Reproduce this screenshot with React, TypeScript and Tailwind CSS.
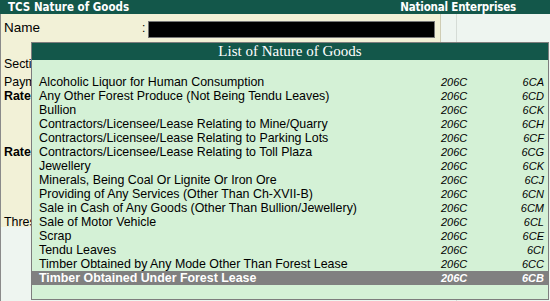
import React from "react";

const rows: [string, string, string][] = [
  ["Alcoholic Liquor for Human Consumption", "206C", "6CA"],
  ["Any Other Forest Produce (Not Being Tendu Leaves)", "206C", "6CD"],
  ["Bullion", "206C", "6CK"],
  ["Contractors/Licensee/Lease Relating to Mine/Quarry", "206C", "6CH"],
  ["Contractors/Licensee/Lease Relating to Parking Lots", "206C", "6CF"],
  ["Contractors/Licensee/Lease Relating to Toll Plaza", "206C", "6CG"],
  ["Jewellery", "206C", "6CK"],
  ["Minerals, Being Coal Or Lignite Or Iron Ore", "206C", "6CJ"],
  ["Providing of Any Services (Other Than Ch-XVII-B)", "206C", "6CN"],
  ["Sale in Cash of Any Goods (Other Than Bullion/Jewellery)", "206C", "6CM"],
  ["Sale of Motor Vehicle", "206C", "6CL"],
  ["Scrap", "206C", "6CE"],
  ["Tendu Leaves", "206C", "6CI"],
  ["Timber Obtained by Any Mode Other Than Forest Lease", "206C", "6CC"],
  ["Timber Obtained Under Forest Lease", "206C", "6CB"],
];

export default function App() {
  return (
    <div
      className="relative w-[550px] h-[301px] overflow-hidden bg-[#EEF5F0] text-black"
      style={{ fontFamily: '"Liberation Sans", Arial, sans-serif' }}
    >
      {/* header */}
      <div
        className="h-[14px] bg-[#13574A] text-white font-bold text-[11.5px] leading-[14px] flex justify-between pl-[8px] pr-[34px]"
        style={{ fontFamily: '"DejaVu Sans Condensed", "DejaVu Sans", sans-serif' }}
      >
        <span>TCS Nature of Goods</span>
        <span className="tracking-[-0.2px]">National Enterprises</span>
      </div>

      <div className="flex h-[287px]">
        {/* left cream panel */}
        <div className="w-[441px] flex flex-col border-l border-[#8a8a8a]">
          <div className="h-[213px] bg-[#F2F1D7] border-r border-[#cfcdb4]">
            <div className="h-[28px] flex items-center">
              <span className="pl-[3px] w-[141px] text-[13.5px]">Name</span>
              <span className="text-[12px] w-[6px]">:</span>
              <div className="w-[287px] h-[17px] bg-black border border-[#777] mt-[3px]" />
            </div>
            <div className="pl-[3px] w-[30px] overflow-hidden whitespace-nowrap text-[12.4px] leading-[14px]">
              <div className="mt-[15px] h-[14px]">Secti</div>
              <div className="mt-[4px] h-[14px]">Paym</div>
              <div className="h-[14px] font-bold">Rate</div>
              <div className="mt-[42px] h-[14px] font-bold">Rate</div>
              <div className="mt-[56px] h-[14px]">Thres</div>
            </div>
          </div>
          <div className="flex-1 bg-[#EEF5F0]" />
        </div>
        {/* right pane */}
        <div className="w-[16px] border-r border-[#d5dcd6] bg-[#EEF5F0]" />
        <div className="flex-1 bg-[#EEF5F0]" />
      </div>

      {/* popup */}
      <div className="absolute left-[31px] top-[42px] w-[518px] h-[258px] border border-[#7d7d7d] bg-[#D4F1D6] flex flex-col">
        <div
          className="h-[17px] bg-[#13574A] text-white text-[15px] leading-[17px] text-center"
          style={{ fontFamily: '"Liberation Serif", "Times New Roman", serif' }}
        >
          List of Nature of Goods
        </div>
        <div className="pt-[15px] text-[12.4px] leading-[14px]">
          {rows.map(([name, sec, code], i) => {
            const sel = i === rows.length - 1;
            return (
              <div
                key={i}
                className={
                  "h-[14px] flex pl-[7px] pr-[4px] " +
                  (sel ? "bg-[#808080] text-white font-bold" : "")
                }
              >
                <span className="w-[402px] whitespace-nowrap">{name}</span>
                <span className="italic text-[11px]">{sec}</span>
                <span className="italic text-[11px] ml-auto">{code}</span>
              </div>
            );
          })}
        </div>
      </div>
    </div>
  );
}
